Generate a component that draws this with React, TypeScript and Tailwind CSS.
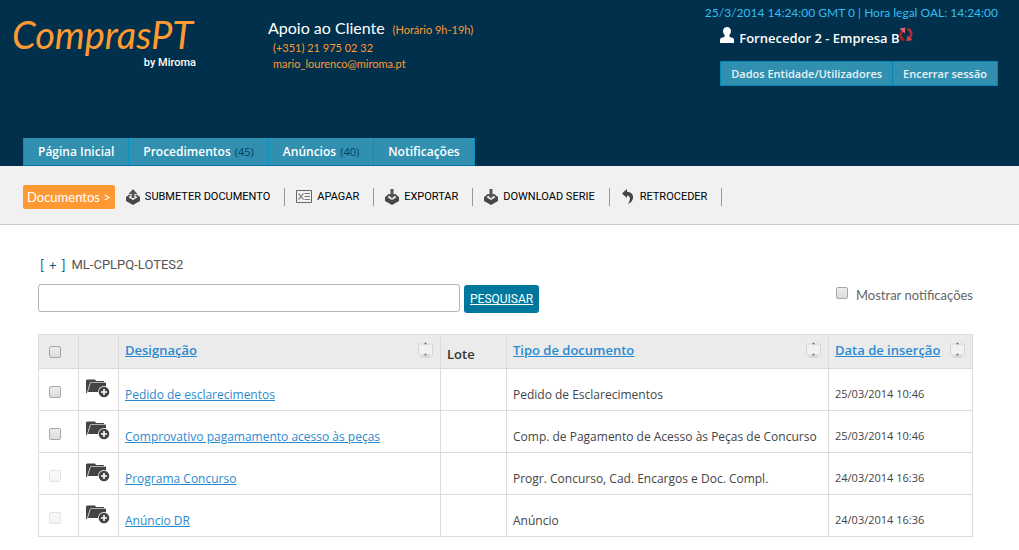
import React from 'react';

interface DocumentRow {
    id: number;
    name: string;
    type: string;
    insertedAt: string;
    locked: boolean;
}

const documents: DocumentRow[] = [
    { id: 1, name: 'Pedido de esclarecimentos', type: 'Pedido de Esclarecimentos', insertedAt: '25/03/2014 10:46', locked: false },
    { id: 2, name: 'Comprovativo pagamamento acesso às peças', type: 'Comp. de Pagamento de Acesso às Peças de Concurso', insertedAt: '25/03/2014 10:46', locked: false },
    { id: 3, name: 'Programa Concurso', type: 'Progr. Concurso, Cad. Encargos e Doc. Compl.', insertedAt: '24/03/2014 16:36', locked: true },
    { id: 4, name: 'Anúncio DR', type: 'Anúncio', insertedAt: '24/03/2014 16:36', locked: true },
];

const tabs = [
    { label: 'Página Inicial' },
    { label: 'Procedimentos', count: 45 },
    { label: 'Anúncios', count: 40 },
    { label: 'Notificações' },
];

const UserIcon = () => (
    <svg width="14" height="16" viewBox="0 0 14 16" fill="#fff" aria-hidden="true">
        <path d="M7 0C4.600 0 3 1.700 3 4c0 2 .8 3.300 1.800 4.200L4 10.300L1.500 10.800C.5 11.200 0 12 0 13v3h14v-3c0-1-.5-1.800-1.500-2.200L10 10.300L9.200 8.200C10.200 7.300 11 6 11 4c0-2.300-1.600-4-4-4z" />
    </svg>
);

const SwitchIcon = () => (
    <svg width="14" height="15" viewBox="0 0 14 15" fill="none" aria-hidden="true">
        <path d="M5.500 13C1.500 12 .8 7.500 3.200 4" stroke="#a3232d" strokeWidth="2.600" />
        <path d="M0.500 1.500L6.500 0.500L5.800 6.500z" fill="#e0606a" />
        <path d="M8.500 2C12.500 3 13.200 7.500 10.800 11" stroke="#b52a35" strokeWidth="2.600" />
        <path d="M13.500 13L7.500 14.300L8.300 8.500z" fill="#d5464f" />
    </svg>
);

const TrayIcon = ({ up = false }: { up?: boolean }) => (
    <svg width="14" height="16" viewBox="0 0 14 16" aria-hidden="true">
        <path d="M0 8L3.500 5.500L5 6.300L2.500 8.300L7 11L11.500 8.300L9 6.300L10.500 5.500L14 8V12L7 16L0 12z" fill="#484848" />
        {up ? (
            <path d="M7 0L11.500 5H8.500V9H5.500V5H2.500z" fill="#555" />
        ) : (
            <path d="M5.500 0h3v5h3L7 9.500L2.500 5h3z" fill="#555" />
        )}
    </svg>
);

const DeleteIcon = () => (
    <svg width="16" height="13" viewBox="0 0 16 13" fill="none" aria-hidden="true">
        <path d="M.5 .5h15v12H.5z" fill="#f4f4f4" stroke="#666" />
        <path d="M2.500 3.500L7.500 9.500M7.500 3.500L2.500 9.500" stroke="#888" strokeWidth="1.200" />
        <path d="M8.500 3.500H14M8.500 6.500H14M8.500 9.500H14" stroke="#777" />
    </svg>
);

const BackIcon = () => (
    <svg width="14" height="15" viewBox="0 0 14 15" fill="#444" aria-hidden="true">
        <path d="M1 4.500L6 0V2.800C10 3 12.500 5.500 12 9C11.700 12 9.500 14 7 15C9.500 11 10 7 6 6.500V9z" />
    </svg>
);

const FolderAddIcon = () => (
    <svg width="24" height="20" viewBox="0 0 24 20" aria-hidden="true">
        <path d="M0 1.500L1 .5H9L10 2H18V4H5L3.500 5.500L1 14H0z" fill="#444" />
        <path d="M4.500 3.500H20V13H1.500z" fill="#444" />
        <path d="M1.500 13L4.500 3.500H19.500" fill="none" stroke="#ccc" strokeWidth=".8" />
        <circle cx="18" cy="13" r="6" fill="#fff" />
        <circle cx="18" cy="13" r="5.300" fill="#444" />
        <path d="M18 10v6M15 13h6" stroke="#fff" strokeWidth="1.600" />
    </svg>
);

const SortIcon = () => (
    <svg width="16" height="17" viewBox="0 0 16 17" aria-hidden="true">
        <ellipse cx="7.500" cy="14.500" rx="5" ry="1.200" fill="#d4d4d4" />
        <rect x=".5" y="2" width="14" height="11" rx="1" fill="#f1f1f1" stroke="#d6d6d6" />
        <path d="M7.500 0L9 2.200H6zM7.500 14L6 11.800H9z" fill="#777" />
    </svg>
);

interface CheckProps {
    id?: string;
    label?: string;
    disabled?: boolean;
}

const Check: React.FC<CheckProps> = ({ id, label, disabled }) => (
    <input
        type="checkbox"
        id={id}
        aria-label={label}
        disabled={disabled}
        className="block h-3 w-3 appearance-none rounded-xs border border-[#a6a6a6] bg-linear-to-b from-[#eeeeee] to-[#dcdcdc] disabled:opacity-30"
    />
);

interface ToolProps {
    icon: React.ReactNode;
    label: string;
}

const Tool: React.FC<ToolProps> = ({ icon, label }) => (
    <button className="flex h-[18px] items-center gap-[5px] border-r border-[#999] pr-[14px] text-black">
        {icon}
        <span className="pt-px">{label}</span>
    </button>
);

const SortHeader = ({ label }: { label: string }) => (
    <div className="flex items-center justify-between pb-[2px]">
        <a href="#" className="text-[#2a8ad0] underline">{label}</a>
        <SortIcon />
    </div>
);

const Header = () => (
    <header className="flex h-[166px] flex-col justify-between bg-[#00304b] text-white">
        <div className="flex">
            <div className="flex w-[268px] flex-col pt-3 pl-3">
                <div className="w-[184px]">
                    <p className="text-[38px] leading-[45px] whitespace-nowrap text-[#ff9933] italic">ComprasPT</p>
                    <p className="text-right font-[Roboto] text-[11px] leading-3 font-medium">by Miroma</p>
                </div>
            </div>
            <div className="pt-[18px] text-[11px] leading-4 text-[#ff9933]">
                <p className="leading-5">
                    <span className="pr-[5px] text-base leading-5 text-white">Apoio ao Cliente</span> (Horário 9h-19h)
                </p>
                <p className="pl-[5px]">(+351) 21 975 02 32</p>
                <p className="pl-[5px]">mario_lourenco@miroma.pt</p>
            </div>
            <div className="ml-auto flex flex-col items-end pt-[5px] pr-[21px]">
                <p className="text-xs leading-4 text-[#33bdf2]">25/3/2014 14:24:00 GMT 0 | Hora legal OAL: 14:24:00</p>
                <div className="flex flex-col">
                    <div className="flex items-start pt-[6px] font-['Open_Sans'] text-[13px] leading-[22px] font-semibold">
                        <UserIcon />
                        <span className="pl-[5px]">Fornecedor 2 - Empresa B</span>
                        <button aria-label="Trocar entidade"><SwitchIcon /></button>
                    </div>
                    <div className="mt-3 flex border border-[#0087b5] bg-[#3190b0] font-['Open_Sans'] text-[11px] leading-[23px] font-semibold text-[#e8f4f8]">
                        <a href="#" className="border-r border-[#0087b5] px-[10px]">Dados Entidade/Utilizadores</a>
                        <a href="#" className="px-[10px]">Encerrar sessão</a>
                    </div>
                </div>
            </div>
        </div>
        <nav className="ml-[23px] flex self-start border-b border-l border-b-[#007aa5] border-l-[#0093c4] bg-[#3190b0] font-['Open_Sans'] text-xs leading-[27px] font-semibold">
            {tabs.map(tab => (
                <a key={tab.label} href="#" className="border-r border-[#0093c4] px-[14px]">
                    {tab.label}
                    {tab.count && <span className="pl-1 text-[11px] font-normal text-[#00405f]">({tab.count})</span>}
                </a>
            ))}
        </nav>
    </header>
);

const Toolbar = () => (
    <div className="flex h-[59px] items-center gap-[11px] border-b border-[#ccc] bg-[#f1f1f1] pt-[3px] pl-[23px] font-[Roboto] text-[11px]">
        <span className="rounded-xs bg-[#ff9933] px-1 font-[Lato] text-[13px] leading-6 text-white">Documentos &gt;</span>
        <Tool icon={<TrayIcon up />} label="SUBMETER DOCUMENTO" />
        <Tool icon={<DeleteIcon />} label="APAGAR" />
        <Tool icon={<TrayIcon />} label="EXPORTAR" />
        <Tool icon={<TrayIcon />} label="DOWNLOAD SERIE" />
        <Tool icon={<BackIcon />} label="RETROCEDER" />
    </div>
);

const DocumentTable = () => (
    <table className="mt-[21px] w-full table-fixed border-collapse font-['Open_Sans'] text-xs text-[#444] [&_td]:border [&_td]:border-[#dcdcdc] [&_th]:border [&_th]:border-[#dcdcdc]">
        <colgroup>
            <col className="w-10" />
            <col className="w-10" />
            <col />
            <col className="w-[66px]" />
            <col />
            <col className="w-36" />
        </colgroup>
        <thead>
            <tr className="h-[34px] bg-[#ebebeb] text-left text-[13px] text-[#333]">
                <th className="pl-[10px]"><Check label="Selecionar todos" /></th>
                <th />
                <th className="px-[6px] font-semibold"><SortHeader label="Designação" /></th>
                <th className="px-[6px] pt-[6px] font-semibold">Lote</th>
                <th className="px-[6px] font-semibold"><SortHeader label="Tipo de documento" /></th>
                <th className="px-[6px] font-semibold"><SortHeader label="Data de inserção" /></th>
            </tr>
        </thead>
        <tbody>
            {documents.map(doc => (
                <tr key={doc.id} className="h-[42px]">
                    <td className="pt-1 pl-[10px]"><Check label={doc.name} disabled={doc.locked} /></td>
                    <td className="pb-[2px] pl-[7px]">
                        <button aria-label="Abrir pasta" className="block"><FolderAddIcon /></button>
                    </td>
                    <td className="px-[6px] pt-[10px]"><a href="#" className="text-[#2a8ad0] underline">{doc.name}</a></td>
                    <td />
                    <td className="px-[6px] pt-[10px]">{doc.type}</td>
                    <td className="px-[6px] pt-[10px] text-[11px]">{doc.insertedAt}</td>
                </tr>
            ))}
        </tbody>
    </table>
);

export default function App() {
    return (
        <div className="min-h-screen bg-white font-[Lato,'Open_Sans',sans-serif]">
            <Header />
            <Toolbar />
            <main className="pt-[30px] pr-[46px] pb-3 pl-[38px]">
                <p className="flex gap-[6px] text-[13px] leading-5 text-[#555]">
                    <button className="flex gap-[5px] pl-[2px] text-[#005a7a]">
                        <span>[</span>
                        <span>+</span>
                        <span>]</span>
                    </button>
                    <span className="font-[Roboto]">ML-CPLPQ-LOTES2</span>
                </p>
                <form className="mt-[9px] flex items-start" onSubmit={e => e.preventDefault()}>
                    <input type="text" aria-label="Pesquisar documentos" className="h-7 w-[422px] rounded-[3px] border border-[#b5b5b5] px-2 text-xs" />
                    <button className="mt-px ml-1 h-7 rounded-[3px] bg-[#00789e] px-[6px] font-[Roboto] text-xs text-white underline">PESQUISAR</button>
                    <div className="ml-auto flex items-start gap-2 pt-[3px] text-[13px] leading-4 text-[#666]">
                        <Check id="show-notifications" />
                        <label htmlFor="show-notifications">Mostrar notificações</label>
                    </div>
                </form>
                <DocumentTable />
            </main>
        </div>
    );
}
